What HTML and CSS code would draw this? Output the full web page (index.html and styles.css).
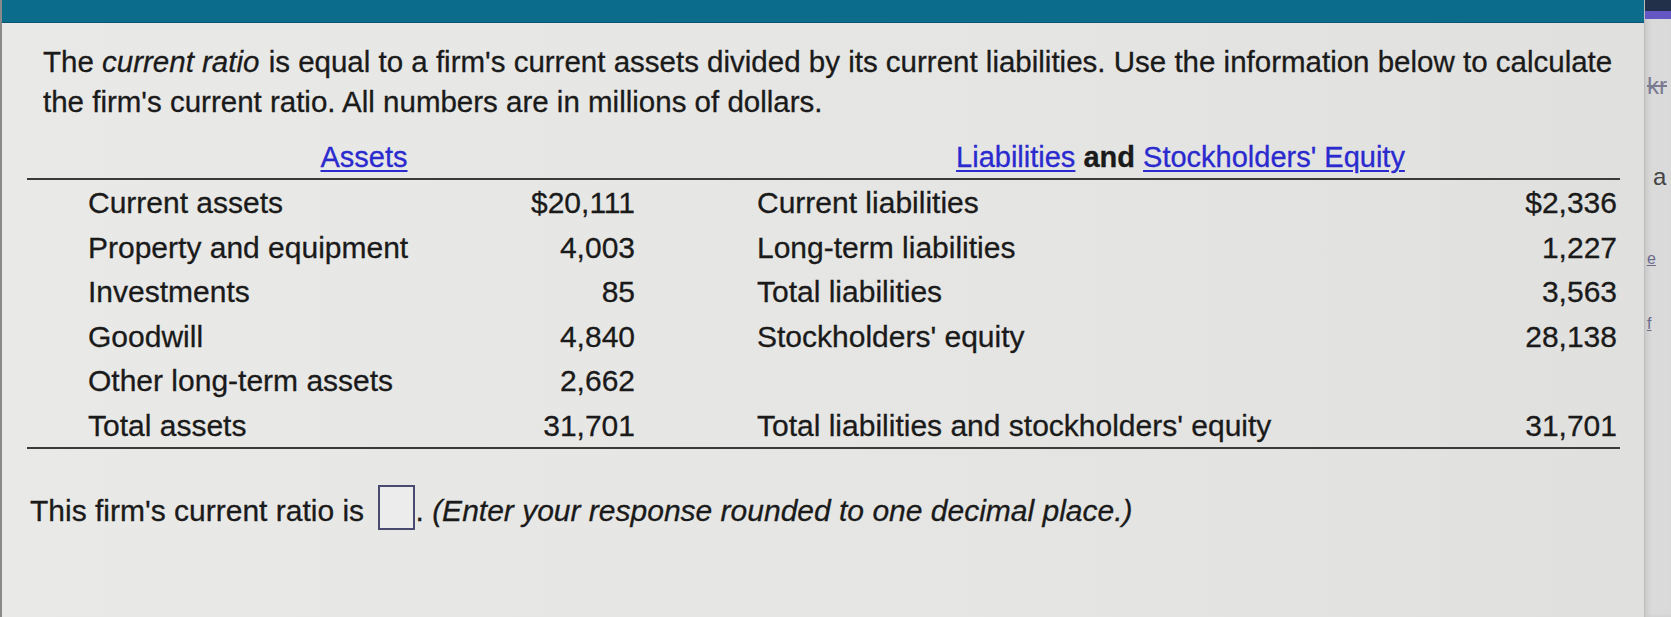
FILE: index.html
```html
<!DOCTYPE html>
<html lang="en">
<head>
<meta charset="utf-8">
<title>Current ratio</title>
<link rel="stylesheet" href="styles.css">
</head>
<body>
<div class="layout">
  <main class="main">
    <div class="topbar"></div>
    <div class="content">
      <p class="intro">The <em>current ratio</em> is equal to a firm's current assets divided by its current liabilities. Use the information below to calculate the firm's current ratio. All numbers are in millions of dollars.</p>
      <div class="sheet">
        <div class="row head">
          <div class="h-assets"><a href="#">Assets</a></div>
          <div class="h-liab"><a href="#">Liabilities</a> <b>and</b> <a href="#">Stockholders' Equity</a></div>
        </div>
        <div class="row"><span class="l1">Current assets</span><span class="v1">$20,111</span><span class="l2">Current liabilities</span><span class="v2">$2,336</span></div>
        <div class="row"><span class="l1">Property and equipment</span><span class="v1">4,003</span><span class="l2">Long-term liabilities</span><span class="v2">1,227</span></div>
        <div class="row"><span class="l1">Investments</span><span class="v1">85</span><span class="l2">Total liabilities</span><span class="v2">3,563</span></div>
        <div class="row"><span class="l1">Goodwill</span><span class="v1">4,840</span><span class="l2">Stockholders' equity</span><span class="v2">28,138</span></div>
        <div class="row"><span class="l1">Other long-term assets</span><span class="v1">2,662</span><span class="l2"></span><span class="v2"></span></div>
        <div class="row last"><span class="l1">Total assets</span><span class="v1">31,701</span><span class="l2">Total liabilities and stockholders' equity</span><span class="v2">31,701</span></div>
      </div>
      <p class="answer">This firm's current ratio is <span class="box"></span>. <em>(Enter your response rounded to one decimal place.)</em></p>
    </div>
  </main>
  <aside class="side">
    <div class="side-top"><div class="side-purple"></div></div>
    <div class="side-kr">kr</div>
    <div class="side-a">a</div>
    <div class="side-e">e</div>
    <div class="side-f">f</div>
  </aside>
</div>
</body>
</html>
```

FILE: styles.css
```css
html, body {
  margin: 0;
  padding: 0;
}
body {
  width: 1671px;
  height: 617px;
  overflow: hidden;
  font-family: "Liberation Sans", Arial, sans-serif;
  color: #1a1a1a;
  background: #e4e4e2;
  -webkit-text-stroke: 0.3px #1a1a1a;
}
.layout {
  display: flex;
  height: 617px;
}
.main {
  flex: 1;
  background: linear-gradient(90deg, #e9e9e7 0%, #e5e5e3 60%, #e0e0de 100%);
  border-left: 2px solid #8a8a8a;
  box-sizing: border-box;
}
.topbar {
  height: 22px;
  background: #0c6c8b;
  border-bottom: 1px solid #0a5672;
}
.content {
  padding-left: 25px;
  width: 1593px;
}
.intro {
  margin: 19px 0 0 16px;
  font-size: 29.5px;
  line-height: 40px;
  width: 1570px;
}
.intro em {
  font-style: italic;
  padding-right: 1px;
}
.sheet {
  margin-top: 14px;
}
.row {
  display: flex;
  height: 44.5px;
  line-height: 46px;
  font-size: 30px;
}
.row.head {
  height: 44px;
  line-height: 42px;
  border-bottom: 2px solid #3a3a3a;
  box-sizing: border-box;
}
.row.last {
  border-bottom: 2px solid #3a3a3a;
  height: 46.5px;
  box-sizing: border-box;
}
.h-assets {
  width: 608px;
  padding-left: 66px;
  box-sizing: border-box;
  text-align: center;
  font-size: 29px;
}
.h-liab {
  flex: 1;
  padding-left: 106px;
  text-align: center;
  font-size: 29px;
}
.h-liab b {
  font-weight: bold;
}
a {
  color: #2a2acf;
  -webkit-text-stroke: 0.3px #2a2acf;
  text-decoration: underline;
  text-decoration-thickness: 2px;
  text-underline-offset: 3px;
}
.l1 {
  width: 420px;
  padding-left: 61px;
  box-sizing: border-box;
  white-space: nowrap;
}
.v1 {
  width: 188px;
  text-align: right;
}
.l2 {
  width: 700px;
  padding-left: 122px;
  box-sizing: border-box;
  white-space: nowrap;
}
.v2 {
  flex: 1;
  text-align: right;
  padding-right: 3px;
}
.answer {
  margin: 36px 0 0 3px;
  font-size: 30px;
  line-height: 40px;
}
.answer em {
  font-style: italic;
}
.box {
  display: inline-block;
  width: 37px;
  height: 45px;
  box-sizing: border-box;
  border: 2px solid #4a4a70;
  background: #ececec;
  vertical-align: -9px;
  margin-left: 6px;
}
.side {
  width: 26px;
  background: #dadada;
  border-left: 1px solid #bdbdbd;
  box-shadow: inset 3px 0 4px rgba(0,0,0,0.08);
  overflow: hidden;
  position: relative;
  font-size: 24px;
  color: #333;
  -webkit-text-stroke: 0;
}
.side-top {
  height: 11px;
  background: #23304a;
}
.side-purple {
  position: absolute;
  top: 11px;
  left: 0;
  right: 0;
  height: 8px;
  background: #6457c4;
}
.side-kr {
  position: absolute;
  top: 72px;
  left: 2px;
  color: #7a7a90;
  text-decoration: line-through;
}
.side-a {
  position: absolute;
  top: 163px;
  left: 8px;
  color: #444;
}
.side-e {
  position: absolute;
  top: 250px;
  left: 2px;
  font-size: 16px;
  color: #6a6a8a;
  text-decoration: underline;
}
.side-f {
  position: absolute;
  top: 315px;
  left: 2px;
  font-size: 16px;
  color: #6a6a8a;
  text-decoration: underline;
}
```
